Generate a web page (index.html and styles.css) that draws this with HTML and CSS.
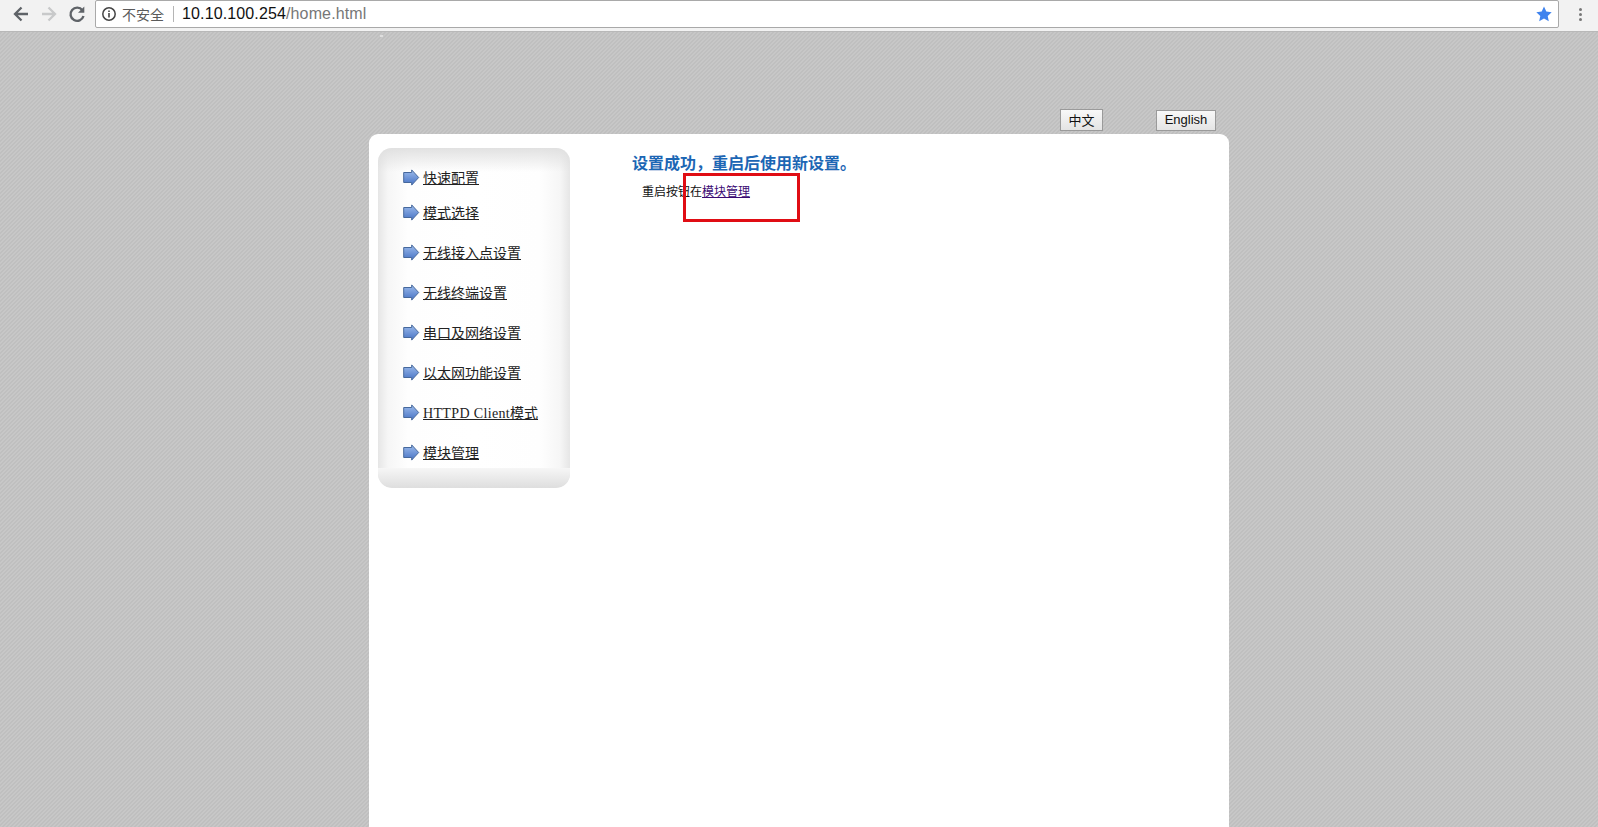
FILE: index.html
```html
<!DOCTYPE html>
<html lang="zh">
<head>
<meta charset="utf-8">
<title>home</title>
<link rel="stylesheet" href="styles.css">
</head>
<body>
<header class="toolbar">
  <svg class="nav-icon" width="20" height="20" viewBox="0 0 20 20"><path d="M17 10H4.5M10.5 3.5 4 10l6.5 6.5" fill="none" stroke="#5f6368" stroke-width="2.3"/></svg>
  <svg class="nav-icon" width="20" height="20" viewBox="0 0 20 20"><path d="M3 10h12.5M9.5 3.5 16 10l-6.5 6.5" fill="none" stroke="#c8c9ca" stroke-width="2.3"/></svg>
  <svg class="nav-icon" width="20" height="20" viewBox="0 0 20 20"><path d="M15.4 6.2A6.6 6.6 0 1 0 16.5 12" fill="none" stroke="#5f6368" stroke-width="2.4"/><path d="M17.3 2.5v6.3H11z" fill="#5f6368"/></svg>
  <div class="omnibox">
    <svg class="info" width="16" height="16" viewBox="0 0 16 16"><circle cx="8" cy="8" r="6.2" fill="none" stroke="#444" stroke-width="1.5"/><path d="M8 7v4.4M8 4.4v1.5" stroke="#444" stroke-width="1.6"/></svg>
    <span class="insecure">不安全</span>
    <span class="sep"></span>
    <span class="url">10.10.100.254<span class="url-path">/home.html</span></span>
    <svg class="star" width="16" height="16" viewBox="0 0 16 16"><path d="M8 .6l2.3 5 5.4.6-4 3.7 1.1 5.4L8 12.5l-4.8 2.8 1.1-5.4-4-3.7 5.4-.6z" fill="#3f83ee"/></svg>
  </div>
  <div class="kebab"><i></i><i></i><i></i></div>
</header>
<main class="stage">
  <div class="speck"></div>
  <div class="langs">
    <button class="lang lang-zh">中文</button>
    <button class="lang lang-en">English</button>
  </div>
  <div class="card">
    <nav class="side">
      <ul class="menu">
        <li class="item item-first"><svg class="arrow" width="17" height="17" viewBox="0 0 17 17"><use href="#arr"/></svg><a href="#">快速配置</a></li>
        <li class="item item-second"><svg class="arrow" width="17" height="17" viewBox="0 0 17 17"><use href="#arr"/></svg><a href="#">模式选择</a></li>
        <li class="item"><svg class="arrow" width="17" height="17" viewBox="0 0 17 17"><use href="#arr"/></svg><a href="#">无线接入点设置</a></li>
        <li class="item"><svg class="arrow" width="17" height="17" viewBox="0 0 17 17"><use href="#arr"/></svg><a href="#">无线终端设置</a></li>
        <li class="item"><svg class="arrow" width="17" height="17" viewBox="0 0 17 17"><use href="#arr"/></svg><a href="#">串口及网络设置</a></li>
        <li class="item"><svg class="arrow" width="17" height="17" viewBox="0 0 17 17"><use href="#arr"/></svg><a href="#">以太网功能设置</a></li>
        <li class="item"><svg class="arrow" width="17" height="17" viewBox="0 0 17 17"><use href="#arr"/></svg><a href="#"><span class="latin">HTTPD Client</span>模式</a></li>
        <li class="item"><svg class="arrow" width="17" height="17" viewBox="0 0 17 17"><use href="#arr"/></svg><a href="#">模块管理</a></li>
      </ul>
      <div class="side-foot"></div>
    </nav>
    <section class="content">
      <h2 class="title">设置成功，重启后使用新设置。</h2>
      <p class="note">重启按钮在<a class="visited" href="#">模块管理</a></p>
    </section>
  </div>
  <div class="redbox"></div>
</main>
<svg class="defs" width="0" height="0"><defs><linearGradient id="g" x1="0" y1="0" x2="0" y2="1"><stop offset="0" stop-color="#9dbcec"/><stop offset="1" stop-color="#4672c4"/></linearGradient><path id="arr" d="M.7 3.5h8V.9l7 7.6-7 7.6v-2.6h-8z" fill="url(#g)" stroke="#46689c"/></defs></svg>
</body>
</html>
```
FILE: styles.css
```css
* { box-sizing: border-box; }
html, body { margin: 0; height: 100%; overflow: hidden; }
body {
  font-family: "Liberation Serif", "Noto Sans CJK SC", serif;
  background-color: #c3c3c3;
  background-image: linear-gradient(135deg, #bfbfbf 25%, #c7c7c7 25% 50%, #bfbfbf 50% 75%, #c7c7c7 75%);
  background-size: 4px 4px;
}
.toolbar {
  height: 32px;
  background: #f2f2f2;
  border-bottom: 1px solid #b8b8b8;
  display: flex;
  align-items: flex-start;
  padding: 4px 0 0 11px;
  gap: 3px;
}
.nav-icon { flex: none; margin-right: 5px; }
.omnibox {
  width: 1464px;
  height: 28px;
  margin: -4px 0 0 0;
  background: #fff;
  border: 1px solid #a9a9a9;
  border-radius: 2px;
  display: flex;
  align-items: center;
  padding: 0 6px 0 5px;
  font-family: "Liberation Sans", "Noto Sans CJK SC", sans-serif;
}
.info { flex: none; }
.insecure { font-size: 14px; color: #5a5a5a; margin-left: 5px; }
.sep { width: 1px; height: 16px; background: #b5b5b5; margin: 0 8px 0 9px; }
.url { font-size: 16px; letter-spacing: .13px; color: #111; flex: 1; }
.url-path { color: #777; }
.star { flex: none; }
.kebab { display: flex; flex-direction: column; gap: 2px; margin: 4px 0 0 17px; }
.kebab i { display: block; width: 3px; height: 3px; border-radius: 50%; background: #777; }
.stage { position: relative; width: 860px; margin-left: 369px; }
.speck { position: absolute; left: 11px; top: 3px; width: 3px; height: 2px; background: #dedede; }
.langs { height: 102px; display: flex; align-items: flex-end; padding-bottom: 3px; }
.lang {
  font-family: "Liberation Sans", "Noto Sans CJK SC", sans-serif;
  font-size: 13px;
  color: #111;
  padding: 0 0 2px;
  height: 21px;
  border: 1px solid #9a9a9a;
  background: linear-gradient(#f8f8f8, #e4e4e4);
}
.lang-zh { width: 43px; height: 22px; margin-left: 691px; }
.lang-en { width: 60px; margin-left: 53px; }
.card {
  height: 693px;
  background: #fff;
  border-radius: 9px 9px 0 0;
  display: flex;
  align-items: flex-start;
  padding: 14px 0 0 9px;
}
.side {
  width: 192px;
  flex: none;
  border-radius: 14px;
  overflow: hidden;
  background: linear-gradient(90deg, #e6e6e6 0, #f6f6f6 10px, #fefefe 30px, #fff 50%, #fefefe calc(100% - 30px), #f6f6f6 calc(100% - 10px), #e6e6e6 100%);
  position: relative;
}
.side::before {
  content: "";
  position: absolute;
  inset: 0 0 auto 0;
  height: 24px;
  background: linear-gradient(rgba(222,222,222,.9), rgba(255,255,255,0));
}
.menu { list-style: none; margin: 0; padding: 0; position: relative; height: 303px; }
.item { display: flex; align-items: center; height: 24px; margin-top: 16px; padding-left: 25px; font-size: 14px; }
.item-first { margin-top: 17px; }
.item-second { margin-top: 11px; }
.arrow { flex: none; margin: 0 3px 0 0; }
.item a { color: #222; }
.latin { letter-spacing: .35px; }
.side-foot { height: 20px; background: linear-gradient(#f6f6f6, #dedede); border-radius: 0 0 14px 14px; }
.content { padding: 4px 0 0 62px; }
.title { margin: 0; font-size: 16px; line-height: 24px; font-weight: 700; color: #1c66b4; font-family: "Liberation Sans", "Noto Sans CJK SC", sans-serif; }
.note { margin: 8px 0 0 10px; font-size: 12px; line-height: 16px; color: #111; font-family: "Liberation Sans", "Noto Sans CJK SC", sans-serif; }
.visited { color: #3b0a73; }
.redbox { position: absolute; left: 314px; top: 141px; width: 117px; height: 49px; border: 3px solid #e00d14; }
.defs { position: absolute; }
```
